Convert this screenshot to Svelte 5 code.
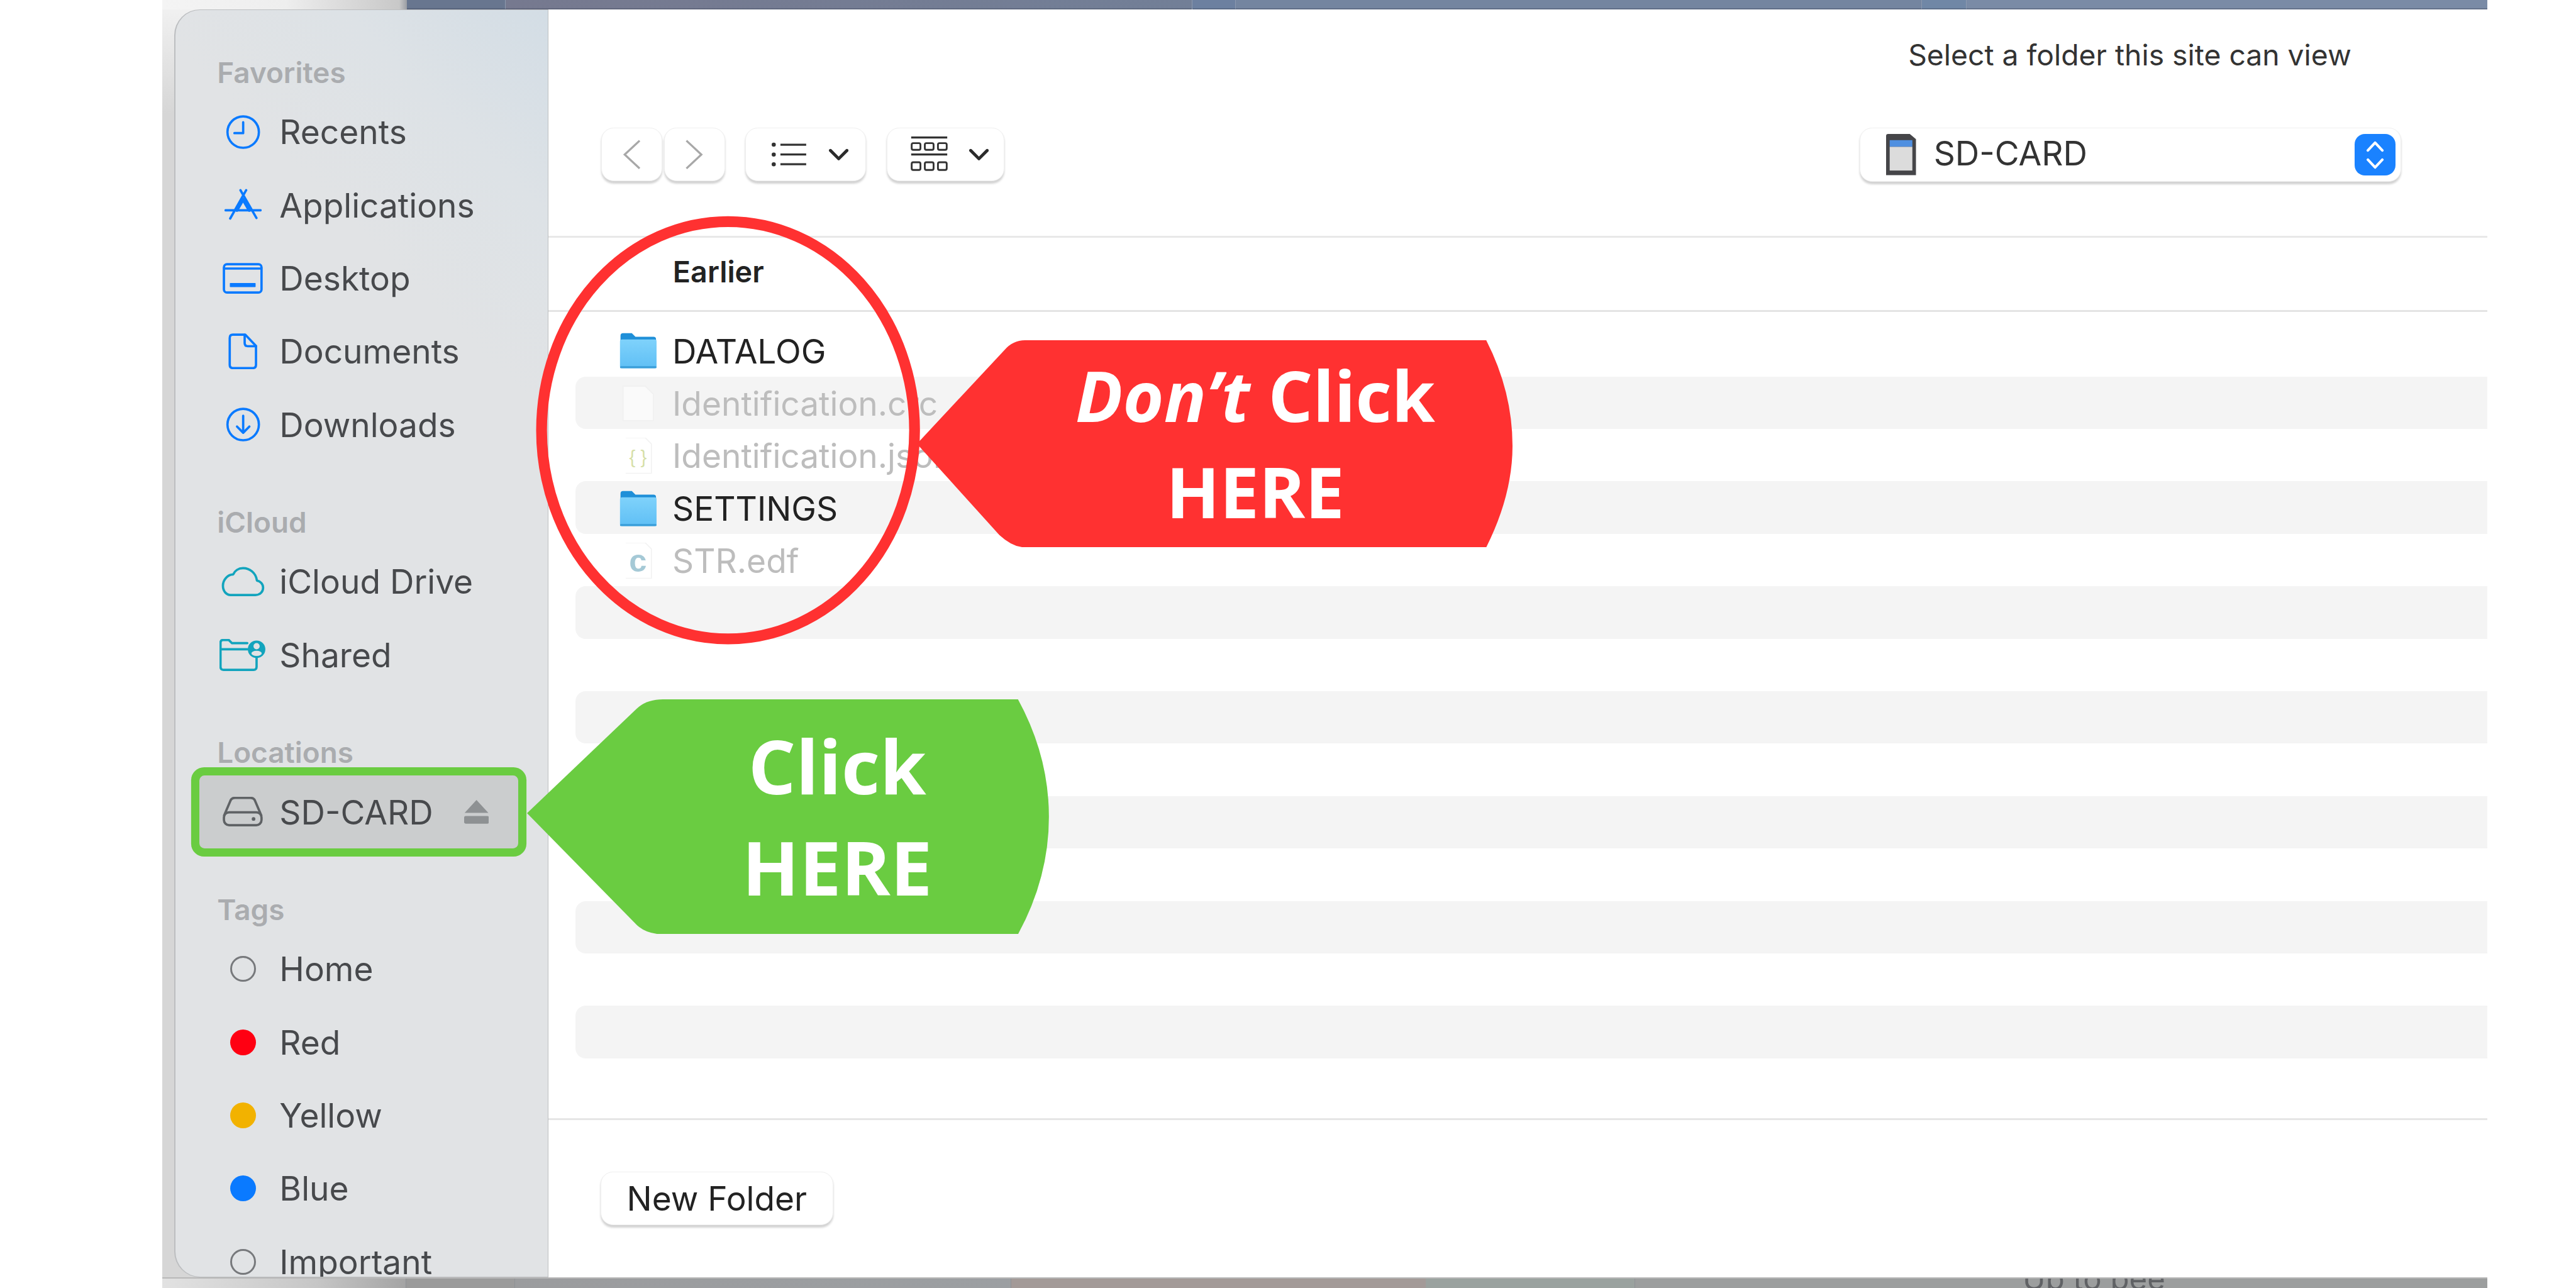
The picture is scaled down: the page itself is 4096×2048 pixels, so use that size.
<script>
  // All sizes below are in reference pixels, .page is zoomed down to the window.
  const sections = [
    { title: 'Favorites', items: [
      { label: 'Recents', icon: 'clock' },
      { label: 'Applications', icon: 'apps' },
      { label: 'Desktop', icon: 'desktop' },
      { label: 'Documents', icon: 'doc' },
      { label: 'Downloads', icon: 'download' },
    ] },
    { title: 'iCloud', items: [
      { label: 'iCloud Drive', icon: 'cloud' },
      { label: 'Shared', icon: 'shared' },
    ] },
    { title: 'Locations', items: [
      { label: 'SD-CARD', icon: 'drive', selected: true },
    ] },
    { title: 'Tags', items: [
      { label: 'Home', tag: 'none' },
      { label: 'Red', tag: '#ff0012' },
      { label: 'Yellow', tag: '#f2b200' },
      { label: 'Blue', tag: '#0a7aff' },
      { label: 'Important', tag: 'none' },
    ] },
  ];

  const files = [
    { name: 'DATALOG', kind: 'folder' },
    { name: 'Identification.crc', kind: 'blank' },
    { name: 'Identification.json', kind: 'json' },
    { name: 'SETTINGS', kind: 'folder' },
    { name: 'STR.edf', kind: 'c' },
    { name: '' }, { name: '' }, { name: '' }, { name: '' }, { name: '' },
    { name: '' }, { name: '' }, { name: '' }, { name: '' }, { name: '' },
  ];
</script>

{#snippet sideIcon(name)}
  {#if name === 'clock'}
    <svg class="blue" width="70" height="66" viewBox="0 0 70 66"><circle cx="35" cy="33" r="30.5"/><path d="M35 14v21H18"/></svg>
  {:else if name === 'apps'}
    <svg class="blue" width="72" height="64" viewBox="0 0 72 64"><path d="M42 3 11 58M31 3l31 54M2 42h68"/><path d="M24 42 36 21l12 21" stroke-width="6"/></svg>
  {:else if name === 'desktop'}
    <svg class="blue" width="78" height="60" viewBox="0 0 78 60"><rect x="2.5" y="2.5" width="73" height="55" rx="6"/><path d="M3 11h72"/><rect class="solid" x="14" y="39" width="50" height="8" rx="1"/></svg>
  {:else if name === 'doc'}
    <svg class="blue" width="58" height="70" viewBox="0 0 58 70"><path d="M10 2.5h24l21 22V61q0 6.500-6 6.500H10q-6 0-6-6.500V9q0-6.500 6-6.500Z"/><path d="M33 3v16q0 6 6 6h16"/></svg>
  {:else if name === 'download'}
    <svg class="blue" width="70" height="66" viewBox="0 0 70 66"><circle cx="35" cy="33" r="30.500"/><path d="M35 16v32M23 37l12 12 12-12"/></svg>
  {:else if name === 'cloud'}
    <svg class="teal" width="84" height="58" viewBox="0 0 84 58"><path d="M18 55H66C75 55 81 49 81 41 81 33 75 28 69 27 67 12 55 3 42 3 33 3 26 8 23 15 12 15 3 26 3 37 3 47 9 55 18 55Z"/></svg>
  {:else if name === 'shared'}
    <svg class="teal" width="90" height="62" viewBox="0 0 90 62"><path d="M54 8H24L18 2H7Q2 2 2 7V54Q2 60 8 60H66Q72 60 72 54V36M2 20H54"/><circle class="solid" cx="72" cy="20" r="17"/><circle class="cut" cx="72" cy="14" r="6"/><ellipse class="cut" cx="72" cy="28" rx="10" ry="5"/></svg>
  {:else if name === 'drive'}
    <svg class="grey" width="78" height="58" viewBox="0 0 78 58"><path d="M3 36 15 8Q17 2 24 2H54Q61 2 63 8L75 36"/><rect x="2.500" y="30" width="73" height="25" rx="10"/><circle class="solid" cx="60" cy="43" r="3.500"/></svg>
  {/if}
{/snippet}

{#snippet fileIcon(kind)}
  {#if kind === 'folder'}
    <svg width="72" height="70" viewBox="0 0 72 70">
      <defs>
        <linearGradient id="folderFace" x1="0" y1="0" x2="0" y2="1"><stop offset="0" stop-color="#7fd2fb"/><stop offset="1" stop-color="#5fbff5"/></linearGradient>
      </defs>
      <path d="M2 6Q2 1 7 1H24L31 8H66Q71 8 71 13V30H2Z" fill="#1f8fd8"/>
      <rect x="1" y="13" width="71" height="56" rx="4" fill="url(#folderFace)"/>
      <rect x="1" y="65" width="71" height="4" rx="2" fill="#3a9ed9"/>
    </svg>
  {:else if kind === 'blank'}
    <svg width="72" height="70" viewBox="0 0 72 70"><path d="M7 1H50L66 17V68H7Z" fill="#fafafa" stroke="#f0f0f0" stroke-width="2"/></svg>
  {:else if kind === 'json'}
    <svg width="72" height="70" viewBox="0 0 72 70"><path d="M12 0H50L62 12V69H12" fill="#fff" stroke="#f2f2f2" stroke-width="2"/><text class="glyph json" x="36" y="50">&#123; &#125;</text></svg>
  {:else if kind === 'c'}
    <svg width="72" height="70" viewBox="0 0 72 70"><path d="M12 0H50L62 12V69H12" fill="#fff" stroke="#f2f2f2" stroke-width="2"/><text class="glyph cee" x="36" y="56">c</text></svg>
  {/if}
{/snippet}

<div class="page">
  <div class="screen">
    <div class="topbar">
      <span class="seg fade"></span>
      <span class="seg one"></span>
      <span class="seg two"></span>
      <span class="seg three"></span>
      <span class="seg four"></span>
      <span class="seg five"></span>
      <span class="seg six"></span>
    </div>

    <div class="window">
      <aside class="sidebar">
        {#each sections as section}
          <section class="group">
            <h3>{section.title}</h3>
            {#each section.items as item}
              <div class="side-row" class:selected={item.selected}>
                <span class="side-icon">
                  {#if item.tag === 'none'}
                    <span class="tag hollow"></span>
                  {:else if item.tag}
                    <span class="tag" style:background={item.tag}></span>
                  {:else}
                    {@render sideIcon(item.icon)}
                  {/if}
                </span>
                <span class="side-label">{item.label}</span>
                {#if item.selected}
                  <svg class="eject" width="48" height="46" viewBox="0 0 48 46"><path d="M24 0 47 25H1Z"/><rect y="31" width="48" height="15" rx="3"/></svg>
                {/if}
              </div>
            {/each}
          </section>
        {/each}
      </aside>

      <main class="main">
        <div class="prompt">Select a folder this site can view</div>

        <div class="toolbar">
          <div class="nav">
            <button class="tool nav-btn" aria-label="Back">
              <svg width="36" height="58" viewBox="0 0 36 58"><path d="M33 2 4 29l29 27"/></svg>
            </button>
            <button class="tool nav-btn" aria-label="Forward">
              <svg width="36" height="58" viewBox="0 0 36 58"><path d="M3 2l29 27L3 56"/></svg>
            </button>
          </div>

          <button class="tool menu list" aria-label="View as list">
            <svg class="ink" width="68" height="48" viewBox="0 0 68 48"><path d="M17 5h50M17 24h50M17 43h50"/><circle cx="4" cy="5" r="4"/><circle cx="4" cy="24" r="4"/><circle cx="4" cy="43" r="4"/></svg>
            <svg class="chev" width="38" height="24" viewBox="0 0 38 24"><path d="M3 4l16 16L35 4"/></svg>
          </button>

          <button class="tool menu grid" aria-label="Group by">
            <svg class="ink thin" width="72" height="70" viewBox="0 0 72 70"><path d="M1 2h70M1 35h70"/><rect x="2" y="13" width="17" height="13" rx="3"/><rect x="27.500" y="13" width="17" height="13" rx="3"/><rect x="53" y="13" width="17" height="13" rx="3"/><rect x="2" y="50" width="17" height="15" rx="3"/><rect x="27.500" y="50" width="17" height="15" rx="3"/><rect x="53" y="50" width="17" height="15" rx="3"/></svg>
            <svg class="chev" width="38" height="24" viewBox="0 0 38 24"><path d="M3 4l16 16L35 4"/></svg>
          </button>

          <div class="tool location">
            <svg width="58" height="80" viewBox="0 0 58 80">
              <path d="M0 4Q0 0 4 0H46L58 10V80H0Z" fill="#454548"/>
              <rect x="7" y="12" width="44" height="13" fill="#4f8fe0"/>
              <rect x="7" y="25" width="44" height="46" fill="#dcdcdc"/>
            </svg>
            <span class="location-name">SD-CARD</span>
            <span class="stepper">
              <svg width="38" height="60" viewBox="0 0 38 60"><path d="M5 21 19 6l14 15M5 39l14 15 14-15"/></svg>
            </span>
          </div>
        </div>

        <div class="column-head">Earlier</div>

        <div class="files">
          {#each files as file, i}
            <div class="file" class:striped={i % 2 === 1} class:dim={file.kind && file.kind !== 'folder'}>
              {#if file.kind}
                <span class="file-icon">{@render fileIcon(file.kind)}</span>
                <span>{file.name}</span>
              {/if}
            </div>
          {/each}
        </div>

        <footer class="footer">
          <button class="tool new-folder">New Folder</button>
        </footer>
      </main>
    </div>

    <div class="bottombar">
      <span class="strip s1"></span>
      <span class="strip s2"></span>
      <span class="strip s3"></span>
      <span class="strip s4"></span>
      <span class="strip s5"></span>
      <span class="strip s6"><span class="peek">Up to pee</span></span>
    </div>
  </div>

  <!-- annotations drawn on top of the screenshot -->
  <svg class="ring" width="760" height="850" viewBox="0 0 760 850"><ellipse cx="378" cy="425" rx="362" ry="405"/></svg>

  <div class="callout red">
    <svg width="1156" height="402" viewBox="0 0 1156 402"><path d="M0 201 170 19Q186 0 210 0H1105Q1156 100 1156 205 1156 300 1105 402H210Q186 402 160 378Z"/></svg>
    <div class="callout-text"><span><em>Don’t</em> Click</span><span>HERE</span></div>
  </div>

  <div class="callout green">
    <svg width="1013" height="456" viewBox="0 0 1013 456"><path d="M0 221 213 18Q232 0 264 0H953Q1013 110 1013 228 1013 346 953 456H264Q232 456 213 438Z"/></svg>
    <div class="callout-text"><span>Click</span><span>HERE</span></div>
  </div>
</div>

<style>
  :global(body) {
    margin: 0;
    background: #fff;
    overflow: hidden;
  }

  .page {
    position: relative;
    width: 5000px;
    height: 2500px;
    zoom: 0.8192;
    background: #fff;
    overflow: hidden;
    font-family: Inter, "Liberation Sans", sans-serif;
  }

  .screen {
    margin-left: 315px;
    width: 4513px;
    height: 2500px;
    display: flex;
    flex-direction: column;
    background: linear-gradient(180deg, #f3f3f3 0, #d6d6d6 220px);
  }

  .topbar {
    height: 18px;
    display: flex;
    flex: none;
  }
  .seg {
    box-sizing: border-box;
    border-right: 2px solid #8c99ae;
    border-bottom: 3px solid rgba(60, 70, 90, 0.35);
  }
  .fade {
    width: 475px;
    background: linear-gradient(90deg, #f4f4f4 0, #eeeeee 240px, #c8c8c8 460px, #9a9da3 475px);
    border: 0;
  }
  .one { width: 192px; background: #68768f; }
  .two { width: 1333px; background: linear-gradient(90deg, #76798f, #727f97); }
  .three { width: 84px; background: #6c80a0; }
  .four { width: 1331px; background: #7485a0; }
  .five { width: 87px; background: #7087a6; }
  .six { flex: 1; border-right: 0; background: #7a8ba6; }

  .window {
    height: 2461px;
    flex: none;
    display: flex;
  }

  .sidebar {
    margin-left: 23px;
    width: 726px;
    flex: none;
    box-sizing: border-box;
    padding: 80px 0 0 81px;
    overflow: hidden;
    border-radius: 50px 0 0 50px;
    border: 2px solid #bcbec0;
    border-left-width: 3px;
    background:
      linear-gradient(225deg, #d3dde5 0, #dde2e6 280px, #e1e3e5 560px);
  }

  .group { margin-bottom: 77px; }

  h3 {
    margin: 0;
    height: 86px;
    line-height: 86px;
    font-size: 56px;
    font-weight: 600;
    color: #aaacaf;
  }

  .side-row {
    display: flex;
    align-items: center;
    height: 142px;
    color: #47494c;
    font-size: 65px;
  }
  .side-icon {
    width: 100px;
    margin-right: 21px;
    display: flex;
    justify-content: center;
    align-items: center;
  }

  .selected {
    margin: 0 0 0 -34px;
    padding-left: 34px;
    width: 619px;
    box-sizing: border-box;
    background: #cbcdce;
    border-radius: 10px;
    box-shadow: 0 0 0 16px #6acc41;
  }
  .eject {
    margin-left: auto;
    margin-right: 58px;
    fill: #8e9193;
  }

  .tag {
    width: 50px;
    height: 50px;
    border-radius: 50%;
    box-sizing: border-box;
  }
  .hollow { border: 4px solid #77797c; }

  .side-icon svg {
    fill: none;
    stroke-width: 4.500;
    stroke-linecap: round;
    stroke-linejoin: round;
  }
  .blue { stroke: #0a7aff; }
  .teal { stroke: #12a4bd; }
  .grey { stroke: #5f6265; }
  .solid { stroke: none; }
  .blue .solid { fill: #0a7aff; }
  .teal .solid { fill: #12a4bd; }
  .grey .solid { fill: #5f6265; }
  .cut { fill: #e1e3e5; stroke: none; }

  .main {
    flex: 1;
    min-width: 0;
    display: flex;
    flex-direction: column;
    background: #fff;
  }

  .prompt {
    height: 230px;
    flex: none;
    padding: 60px 264px 0 0;
    box-sizing: border-box;
    text-align: right;
    line-height: 58px;
    font-size: 56.500px;
    color: #333;
  }

  .toolbar {
    display: flex;
    align-items: flex-start;
    height: 214px;
    flex: none;
    padding: 0 167px 0 103px;
    box-sizing: border-box;
    border-bottom: 4px solid #e8e8e8;
  }

  .tool {
    box-sizing: border-box;
    background: #fff;
    border: 2px solid #efefef;
    border-radius: 24px;
    box-shadow: 0 4px 4px rgba(0, 0, 0, 0.18);
    padding: 0;
    font-family: inherit;
  }

  .nav {
    display: flex;
    gap: 4px;
  }
  .nav-btn {
    width: 118px;
    height: 103px;
    display: flex;
    align-items: center;
    justify-content: center;
  }
  .nav-btn svg {
    fill: none;
    stroke: #a8a8a8;
    stroke-width: 4;
  }

  .menu {
    height: 103px;
    display: flex;
    align-items: center;
  }
  .list {
    width: 234px;
    margin-left: 40px;
    padding-left: 50px;
    gap: 43px;
  }
  .grid {
    width: 228px;
    margin-left: 40px;
    padding-left: 45px;
    gap: 42px;
  }
  .ink path { fill: none; stroke: #333; stroke-width: 4; }
  .ink circle { fill: #333; }
  .ink rect { fill: none; stroke: #333; stroke-width: 3.500; }
  .chev {
    fill: none;
    stroke: #2b2b2b;
    stroke-width: 6;
    stroke-linecap: round;
    stroke-linejoin: round;
  }

  .location {
    margin-left: auto;
    width: 1051px;
    height: 105px;
    display: flex;
    align-items: center;
    padding: 0 10px 0 50px;
  }
  .location-name {
    margin-left: 34px;
    margin-bottom: 6px;
    font-size: 65px;
    color: #333;
  }
  .stepper {
    margin-left: auto;
    width: 80px;
    height: 81px;
    border-radius: 20px;
    background: #1a82ff;
    display: flex;
    align-items: center;
    justify-content: center;
  }
  .stepper svg {
    fill: none;
    stroke: #fff;
    stroke-width: 5;
    stroke-linecap: round;
    stroke-linejoin: round;
  }

  .column-head {
    height: 143px;
    flex: none;
    padding: 36px 0 0 242px;
    box-sizing: border-box;
    line-height: 60px;
    font-size: 57px;
    font-weight: 600;
    color: #222;
    border-bottom: 4px solid #e4e4e4;
  }

  .files {
    flex: 1;
    min-height: 0;
    overflow: hidden;
    padding: 24px 0 0 53px;
  }
  .file {
    height: 101.800px;
    display: flex;
    align-items: center;
    padding: 3px 0 0 85px;
    box-sizing: border-box;
    font-size: 65px;
    color: #222;
    border-radius: 20px 0 0 20px;
  }
  .striped { background: #f4f4f4; }
  .dim { color: #bdbdbd; }
  .file-icon {
    width: 72px;
    height: 70px;
    margin-right: 31px;
  }
  .glyph {
    text-anchor: middle;
    font-family: "Liberation Sans", sans-serif;
  }
  .json { font-size: 36px; fill: #d6dfa8; }
  .cee { font-size: 62px; font-weight: 700; fill: #a5c9d6; }

  .footer {
    height: 309px;
    flex: none;
    box-sizing: border-box;
    border-top: 4px solid #e6e6e6;
    padding: 101px 0 0 102px;
  }
  .new-folder {
    display: block;
    width: 451px;
    height: 103px;
    font-size: 65px;
    color: #222;
  }

  .bottombar {
    flex: 1;
    min-height: 0;
    display: flex;
    overflow: hidden;
    border-top: 3px solid #b8b8b8;
  }
  .strip {
    box-sizing: border-box;
    border-right: 2px solid #8f9296;
  }
  .s1 { width: 473px; background: linear-gradient(90deg, #e2e2e2 0, #c6c6c6 300px, #a4a4a4 473px); }
  .s2 { width: 212px; background: #9b9b9b; }
  .s3 { width: 963px; background: linear-gradient(90deg, #9b9c9e, #9c9fa2); }
  .s4 { width: 804px; background: #a39a98; border-right: 0; }
  .s5 { width: 407px; background: #9aa29f; }
  .s6 {
    flex: 1;
    background: #9c9e9e;
    padding-left: 752px;
    border-right: 0;
  }
  .peek {
    display: block;
    margin-top: -24px;
    line-height: 50px;
    font-size: 60px;
    color: #606265;
  }

  .ring {
    position: absolute;
    left: 1035px;
    top: 410px;
    fill: none;
    stroke: #ff3131;
    stroke-width: 21;
  }

  .callout {
    position: absolute;
    color: #fff;
    font-family: "Open Sans", sans-serif;
    font-weight: 700;
  }
  .callout svg { display: block; }
  .callout.red { left: 1780px; top: 660px; }
  .callout.red svg { fill: #ff3131; }
  .callout.green { left: 1023px; top: 1357px; }
  .callout.green svg { fill: #6acc41; }

  .callout-text {
    position: absolute;
    inset: 0;
    display: flex;
    flex-direction: column;
    align-items: center;
    justify-content: center;
    box-sizing: border-box;
  }
  .red .callout-text {
    padding-left: 157px;
    font-size: 136px;
    line-height: 187px;
  }
  .green .callout-text {
    padding-left: 191px;
    font-size: 145px;
    line-height: 197px;
  }
</style>
